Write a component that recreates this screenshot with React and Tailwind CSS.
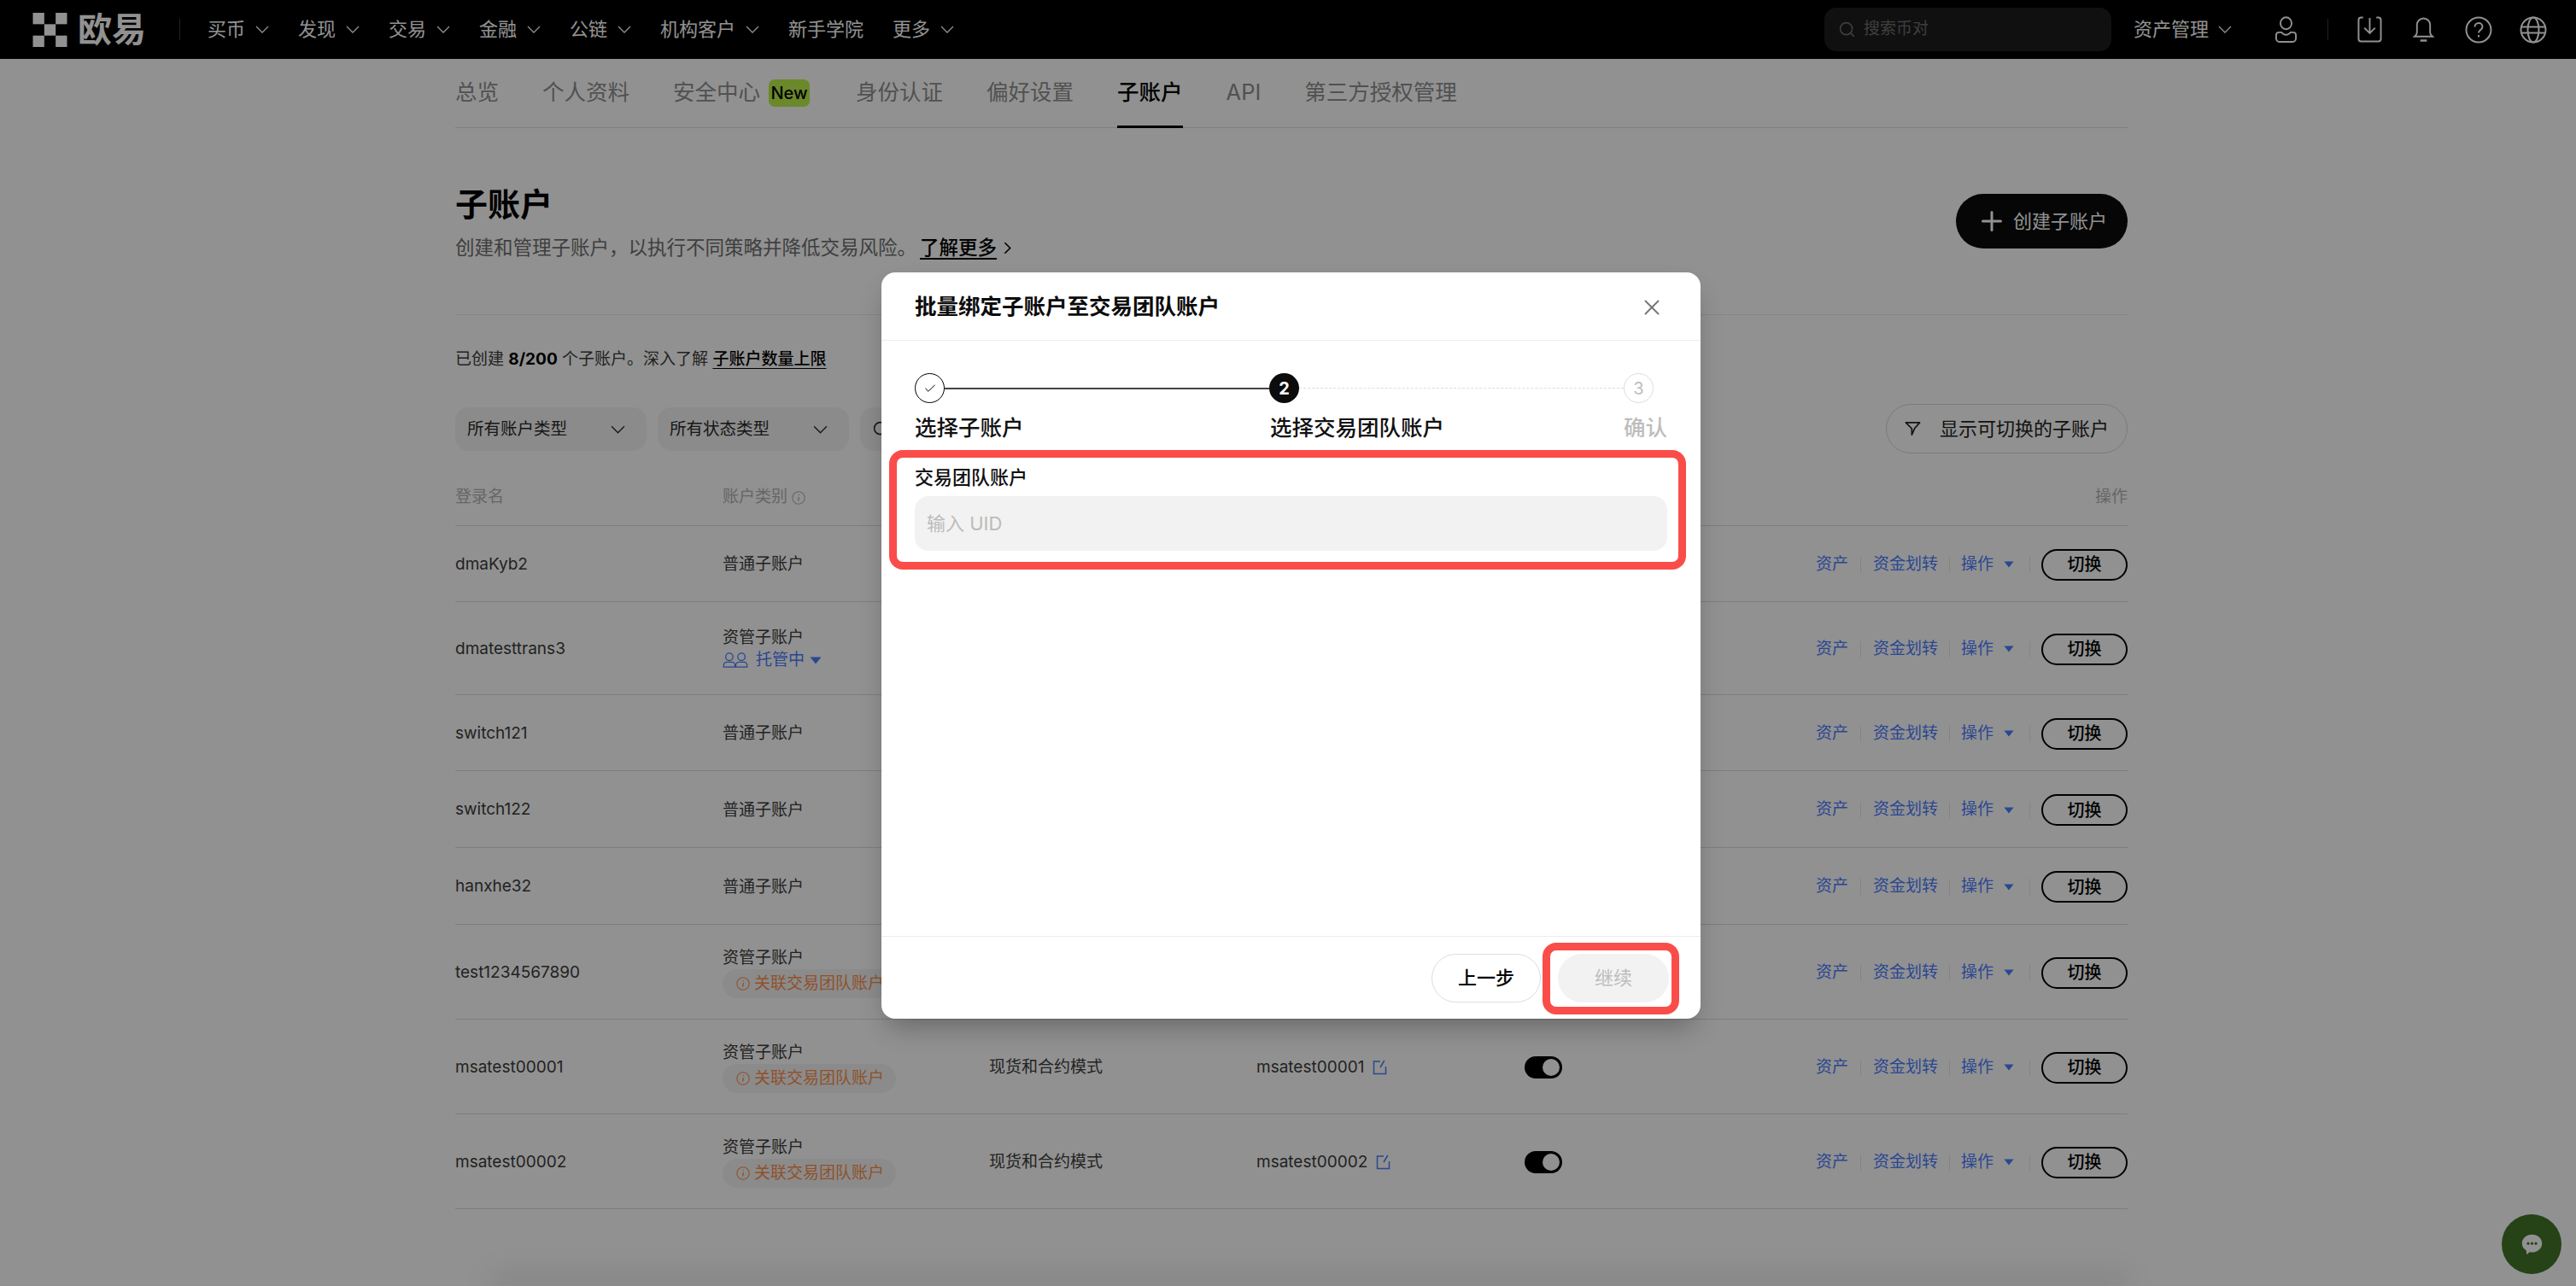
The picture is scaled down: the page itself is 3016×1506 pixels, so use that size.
import React from "react";
import { Check, Plus, Search, X } from "lucide-react";

const navItems = [
  { label: "买币", arrow: true },
  { label: "发现", arrow: true },
  { label: "交易", arrow: true },
  { label: "金融", arrow: true },
  { label: "公链", arrow: true },
  { label: "机构客户", arrow: true },
  { label: "新手学院", arrow: false },
  { label: "更多", arrow: true },
];

const tabs = ["总览", "个人资料", "安全中心", "身份认证", "偏好设置", "子账户", "API", "第三方授权管理"];

const rows = [
  { name: "dmaKyb2", height: "h-[89px]", type: "普通子账户" },
  { name: "dmatesttrans3", height: "h-[109px]", type: "资管子账户", managed: true },
  { name: "switch121", height: "h-[89px]", type: "普通子账户" },
  { name: "switch122", height: "h-[90px]", type: "普通子账户" },
  { name: "hanxhe32", height: "h-[90px]", type: "普通子账户" },
  { name: "test1234567890", height: "h-[111px]", type: "资管子账户", linked: true },
  { name: "msatest00001", height: "h-[111px]", type: "资管子账户", linked: true, mode: "现货和合约模式", alias: "msatest00001" },
  { name: "msatest00002", height: "h-[111px]", type: "资管子账户", linked: true, mode: "现货和合约模式", alias: "msatest00002" },
];

const Caret = ({ className }) => (
  <svg viewBox="0 0 14 9" className={className} fill="currentColor">
    <path d="M0.5 0.5h13L7 8.5z" />
  </svg>
);

const Chevron = ({ className }) => (
  <svg viewBox="0 0 16 9" className={className} fill="none" stroke="currentColor" strokeWidth="1.300">
    <path d="M1 1l7 7 7-7" />
  </svg>
);

const OkxMark = () => (
  <svg viewBox="0 0 39 39" className="w-[41px] h-[40px] text-white" fill="currentColor">
    <rect x="0" y="0" width="13" height="13" />
    <rect x="26" y="0" width="13" height="13" />
    <rect x="13" y="13" width="13" height="13" />
    <rect x="0" y="26" width="13" height="13" />
    <rect x="26" y="26" width="13" height="13" />
  </svg>
);

const UserIcon = () => (
  <svg viewBox="0 0 28 32" className="w-[27px] h-[31px] text-white" fill="none" stroke="currentColor" strokeWidth="2">
    <ellipse cx="14" cy="8.5" rx="6.8" ry="7.2" />
    <path d="M5.5 19.5h3.2c1.2 2 3 3 5.3 3s4.100-1 5.300-3h3.200c2 0 3.500 1.500 3.500 3.500v3.500c0 2.500-2 4.500-4.500 4.500h-15c-2.500 0-4.500-2-4.500-4.500v-3.500c0-2 1.500-3.500 3.500-3.500z" />
  </svg>
);

const DownloadIcon = () => (
  <svg viewBox="0 0 30 32" className="w-[29px] h-[31px] text-white" fill="none" stroke="currentColor" strokeWidth="2">
    <path d="M7 1.500H4.500c-1.700 0-3 1.300-3 3v23c0 1.700 1.300 3 3 3h21c1.700 0 3-1.300 3-3v-23c0-1.700-1.300-3-3-3H23" />
    <path d="M15 2v18M8.500 14l6.500 6.500 6.500-6.500" />
  </svg>
);

const BellIcon = () => (
  <svg viewBox="0 0 26 31" className="w-[25px] h-[30px] text-white" fill="none" stroke="currentColor" strokeWidth="2">
    <path d="M13 1.500c-4.500 0-8 3.500-8 8v9c0 2-1 3.500-3 5h22c-2-1.500-3-3-3-5v-9c0-4.500-3.500-8-8-8z" />
    <path d="M9 28.500h8" strokeWidth="2.600" />
  </svg>
);

const HelpIcon = () => (
  <svg viewBox="0 0 32 32" className="w-[32px] h-[32px] text-white" fill="none" stroke="currentColor" strokeWidth="2">
    <circle cx="16" cy="16" r="14.500" />
    <path d="M11.500 12.500c0-2.600 2-4.500 4.500-4.500s4.500 1.800 4.500 4.200c0 3.800-4.500 3.800-4.500 7.300" />
    <path d="M16 22v2.500" />
  </svg>
);

const GlobeIcon = () => (
  <svg viewBox="0 0 32 32" className="w-[32px] h-[32px] text-white" fill="none" stroke="currentColor" strokeWidth="2">
    <circle cx="16" cy="16" r="14.500" />
    <ellipse cx="16" cy="16" rx="6.500" ry="14.500" />
    <path d="M2 12.500h28M2 19.500h28" />
  </svg>
);

const FilterIcon = () => (
  <svg viewBox="0 0 20 18" className="w-[19px] h-[18px]" fill="none" stroke="currentColor" strokeWidth="1.800" strokeLinejoin="round">
    <path d="M1.500 1.500h17l-6.300 7.300-3.400 7.700V9z" />
  </svg>
);

const InfoIcon = () => (
  <svg viewBox="0 0 16 16" className="w-[16px] h-[16px] shrink-0" fill="none" stroke="currentColor" strokeWidth="1.100">
    <circle cx="8" cy="8" r="7.200" />
    <path d="M8.400 4.200v1M8.300 7l-.6 4.500" strokeWidth="1.400" />
  </svg>
);

const TeamIcon = () => (
  <svg viewBox="0 0 31 19" className="w-[30px] h-[18px] shrink-0" fill="none" stroke="currentColor" strokeWidth="1.400">
    <circle cx="8" cy="5.500" r="4.500" />
    <circle cx="23" cy="5.500" r="4.500" />
    <path d="M1 18v-2c0-2 1.500-4 4-4h6c2.500 0 4 2 4 4v2zM16 18v-2c0-2 1.500-4 4-4h6c2.500 0 4 2 4 4v2z" />
  </svg>
);

const EditIcon = () => (
  <svg viewBox="0 0 17 18" className="w-[17px] h-[18px] shrink-0" fill="none" stroke="currentColor" strokeWidth="1.500">
    <path d="M9 2H1.500v14.500h14V8" />
    <path d="M13.800 1l-4.800 8" />
  </svg>
);

const ChatIcon = () => (
  <svg viewBox="0 0 30 30" className="w-[27px] h-[27px]" fill="white">
    <path d="M15 2c7.500 0 13 5 13 11.500S22.500 25 15 25c-1 0-2-.1-3-.3L8 28l-.5-5.500C4 20.500 2 17.300 2 13.500 2 7 7.500 2 15 2z" />
    <circle cx="10" cy="13.500" r="1.700" fill="#43742a" />
    <circle cx="15" cy="13.500" r="1.700" fill="#43742a" />
    <circle cx="20" cy="13.500" r="1.700" fill="#43742a" />
  </svg>
);

const Header = () => (
  <div className="flex items-center h-[69px] bg-black text-white pl-[38px] text-[22px]">
    <div className="flex items-center w-[172px] shrink-0">
      <OkxMark />
      <span className="ml-[12px] text-[40px] leading-none font-bold">欧易</span>
    </div>
    <div className="w-px h-[25px] bg-[#3a3a3a] shrink-0" />
    <div className="flex items-center ml-[32px] gap-[34px]">
      {navItems.map((item) => (
        <div key={item.label} className="flex items-center gap-[12px]">
          <span>{item.label}</span>
          {item.arrow && <Chevron className="w-[16px] h-[9px]" />}
        </div>
      ))}
    </div>
    <div className="flex items-center ml-auto mr-[34px]">
      <div className="flex items-center w-[336px] h-[51px] rounded-[14px] bg-[#1d1d1d] pl-[16px] text-[19px] text-[#6e6e6e]">
        <Search className="w-[21px] h-[21px]" strokeWidth={1.8} />
        <span className="ml-[9px]">搜索币对</span>
      </div>
      <span className="ml-[26px]">资产管理</span>
      <Chevron className="ml-[11px] w-[16px] h-[9px]" />
      <div className="ml-[50px]"><UserIcon /></div>
      <div className="ml-[35px] w-px h-[25px] bg-[#3a3a3a]" />
      <div className="ml-[34px]"><DownloadIcon /></div>
      <div className="ml-[36px]"><BellIcon /></div>
      <div className="ml-[36px]"><HelpIcon /></div>
      <div className="ml-[32px]"><GlobeIcon /></div>
    </div>
  </div>
);

const Tabs = () => (
  <div className="flex items-start gap-[51px] h-[81px] border-b border-[#dcdcdc] pt-[24px] text-[25.500px] leading-[30px] text-[#8f8f8f]">
    {tabs.map((tab) => (
      <div key={tab} className={tab === "子账户" ? "relative h-[57px] text-black font-medium" : "flex items-start"}>
        {tab}
        {tab === "安全中心" && (
          <span className="ml-[10px] mr-[3px] flex items-center justify-center w-[48px] h-[32px] rounded-[7px] bg-[#bcf04a] text-[20px] font-medium text-black">New</span>
        )}
        {tab === "子账户" && <div className="absolute left-0 right-0 bottom-0 h-[3px] bg-black" />}
      </div>
    ))}
  </div>
);

const RowActions = () => (
  <div className="ml-auto flex items-center text-[19px] text-[#4a7dff]">
    <span>资产</span>
    <div className="mx-[14px] w-px h-[19px] bg-[#e8e8e8]" />
    <span>资金划转</span>
    <div className="mx-[13px] w-px h-[19px] bg-[#e8e8e8]" />
    <span>操作</span>
    <Caret className="ml-[12px] w-[12px] h-[8px]" />
    <div className="ml-[18px] mr-[13px] w-px h-[19px] bg-[#e8e8e8]" />
    <button className="w-[101px] h-[37px] rounded-full border-2 border-black text-[20px] font-medium leading-none text-black">切换</button>
  </div>
);

const Row = ({ row }) => (
  <div className={`grid grid-cols-[313px_312px_313px_314px_1fr] items-center border-b border-[#dcdcdc] pt-[2px] text-[19px] text-[#3c3c3c] ${row.height}`}>
    <span>{row.name}</span>
    <div className="flex flex-col items-start">
      <span className="leading-[26px]">{row.type}</span>
      {row.managed && (
        <div className="flex items-center leading-[26px] text-[#4a7dff]">
          <TeamIcon />
          <span className="ml-[9px]">托管中</span>
          <Caret className="ml-[6px] w-[14px] h-[9px]" />
        </div>
      )}
      {row.linked && (
        <div className="flex items-center w-[203px] h-[34px] rounded-full bg-[#f5f5f5] pl-[16px] text-[#fc8f4d]">
          <InfoIcon />
          <span className="ml-[5px]">关联交易团队账户</span>
        </div>
      )}
    </div>
    <span>{row.mode}</span>
    <div className="flex items-center">
      {row.alias && (
        <>
          <span>{row.alias}</span>
          <span className="ml-[10px] text-[#4a7dff]"><EditIcon /></span>
        </>
      )}
    </div>
    <div className="flex items-center">
      {row.alias && (
        <div className="flex items-center justify-end w-[44px] h-[26px] rounded-full bg-black pr-[3px]">
          <div className="w-[20px] h-[20px] rounded-full bg-white" />
        </div>
      )}
      <RowActions />
    </div>
  </div>
);

const Page = () => (
  <div className="ml-[533px] w-[1958px]">
    <Tabs />
    <div className="flex justify-between h-[219px] border-b border-[#e8e8e8]">
      <div className="pt-[65px]">
        <h1 className="text-[38px] leading-[48px] font-bold text-black">子账户</h1>
        <div className="flex items-center mt-[12px] text-[22.500px] leading-[30px] text-[#6f6f6f]">
          <span>创建和管理子账户，以执行不同策略并降低交易风险。</span>
          <span className="ml-[4px] font-medium text-black underline underline-offset-4">了解更多</span>
          <svg viewBox="0 0 10 16" className="ml-[8px] w-[9px] h-[15px] text-black" fill="none" stroke="currentColor" strokeWidth="1.800">
            <path d="M1.500 1l7 7-7 7" />
          </svg>
        </div>
      </div>
      <button className="mt-[77px] flex items-center justify-center w-[201px] h-[64px] rounded-full bg-[#0c0c0c] text-[22px] text-white">
        <Plus className="w-[36px] h-[36px]" strokeWidth={2} />
        <span className="ml-[7px]">创建子账户</span>
      </button>
    </div>
    <p className="mt-[38px] text-[19px] leading-[28px] text-[#3c3c3c]">
      已创建 <span className="font-bold text-black">8/200</span> 个子账户。深入了解{" "}
      <span className="font-medium text-black underline underline-offset-4">子账户数量上限</span>
    </p>
    <div className="flex items-start justify-between mt-[38px] h-[95px]">
      <div className="flex gap-[13px] mt-[4px] text-[19.500px] text-[#2a2a2a]">
        <div className="flex items-center justify-between w-[224px] h-[51px] rounded-[16px] bg-[#f5f5f5] pl-[14px] pr-[25px]">
          <span>所有账户类型</span>
          <Chevron className="w-[17px] h-[10px]" />
        </div>
        <div className="flex items-center justify-between w-[224px] h-[51px] rounded-[16px] bg-[#f5f5f5] pl-[14px] pr-[25px]">
          <span>所有状态类型</span>
          <Chevron className="w-[17px] h-[10px]" />
        </div>
        <div className="flex items-center w-[300px] h-[51px] rounded-[16px] bg-[#f5f5f5] px-[14px]">
          <Search className="w-[21px] h-[21px]" strokeWidth={1.8} />
        </div>
      </div>
      <button className="flex items-center justify-center w-[283px] h-[58px] rounded-full border border-[#d8d8d8] text-[22px] text-[#222222]">
        <FilterIcon />
        <span className="ml-[22px]">显示可切换的子账户</span>
      </button>
    </div>
    <div className="grid grid-cols-[313px_1fr_auto] items-center h-[48px] border-b border-[#dcdcdc] pb-[18px] text-[19px] text-[#b4b4b4]">
      <span>登录名</span>
      <div className="flex items-center">
        <span>账户类别</span>
        <span className="ml-[5px]"><InfoIcon /></span>
      </div>
      <span>操作</span>
    </div>
    {rows.map((row) => (
      <Row key={row.name} row={row} />
    ))}
  </div>
);

const Stepper = () => (
  <div className="pt-[38px]">
    <div className="flex items-center">
      <div className="flex items-center justify-center w-[35px] h-[35px] shrink-0 rounded-full border border-black">
        <Check className="w-[16px] h-[16px]" strokeWidth={1.5} />
      </div>
      <div className="w-[380px] h-[2px] bg-[#444444]" />
      <div className="flex items-center justify-center w-[35px] h-[35px] shrink-0 rounded-full bg-[#0c0c0c] text-[20px] font-bold text-white">2</div>
      <div className="w-[380px] border-t border-dashed border-[#dddddd]" />
      <div className="flex items-center justify-center w-[35px] h-[35px] shrink-0 rounded-full border border-[#dddddd] text-[20px] text-[#bdbdbd]">3</div>
    </div>
    <div className="flex mt-[12px] text-[25.500px] leading-[34px] font-medium whitespace-nowrap text-[#111111]">
      <span className="w-[416px] shrink-0">选择子账户</span>
      <span className="w-[414px] shrink-0">选择交易团队账户</span>
      <span className="shrink-0 text-[#bdbdbd]">确认</span>
    </div>
  </div>
);

const Modal = () => (
  <div className="relative flex flex-col w-[959px] h-[874px] rounded-[16px] bg-white shadow-[0_16px_32px_-8px_rgba(0,0,0,0.3)]">
    <div className="flex items-center justify-between h-[80px] shrink-0 border-b border-[#ebebeb] pt-[2px] pl-[39px] pr-[42px]">
      <h2 className="text-[25.500px] font-bold text-[#0c0c0c]">批量绑定子账户至交易团队账户</h2>
      <X className="w-[30px] h-[30px] text-[#777777]" strokeWidth={1.5} />
    </div>
    <div className="flex-1 px-[39px]">
      <Stepper />
      <label className="block mt-[25px] text-[22px] leading-[32px] font-medium text-[#111111]">交易团队账户</label>
      <div className="flex items-center w-[881px] h-[64px] mt-[6px] rounded-[16px] bg-[#f2f2f2] px-[14px] text-[22px] text-[#bbbbbb]">输入 UID</div>
    </div>
    <div className="flex items-center justify-end gap-[20px] h-[97px] shrink-0 border-t border-[#ebebeb] pr-[37px] text-[22px]">
      <button className="w-[128px] h-[57px] rounded-full border border-[#dddddd] font-medium text-black">上一步</button>
      <button className="w-[130px] h-[57px] rounded-full bg-[#f2f2f2] text-[#bdbdbd]">继续</button>
    </div>
    {/* red annotation boxes from the doc screenshot */}
    <div className="absolute left-[9px] top-[208px] w-[933px] h-[140px] rounded-[16px] border-[9px] border-[#fa4d4a]" />
    <div className="absolute left-[774px] top-[785px] w-[160px] h-[84px] rounded-[16px] border-[9px] border-[#fa4d4a]" />
  </div>
);

const App = () => {
  return (
    <div className="relative w-full h-[1506px] overflow-hidden bg-white font-['Inter','Noto_Sans_CJK_SC',sans-serif]">
      <Header />
      <Page />
      {/* page's own bottom edge shadow, sits under the dim layer */}
      <div className="absolute left-[575px] right-[525px] -bottom-[10px] h-[10px] shadow-[0_-8px_36px_rgba(0,0,0,0.24)]" />
      <div className="absolute right-[17px] bottom-[14px] flex items-center justify-center w-[70px] h-[70px] rounded-full bg-[#43742a]">
        <ChatIcon />
      </div>
      <div className="absolute inset-0 bg-black/43 pl-[1032px] pt-[319px]">
        <Modal />
      </div>
    </div>
  );
};

export default App;
